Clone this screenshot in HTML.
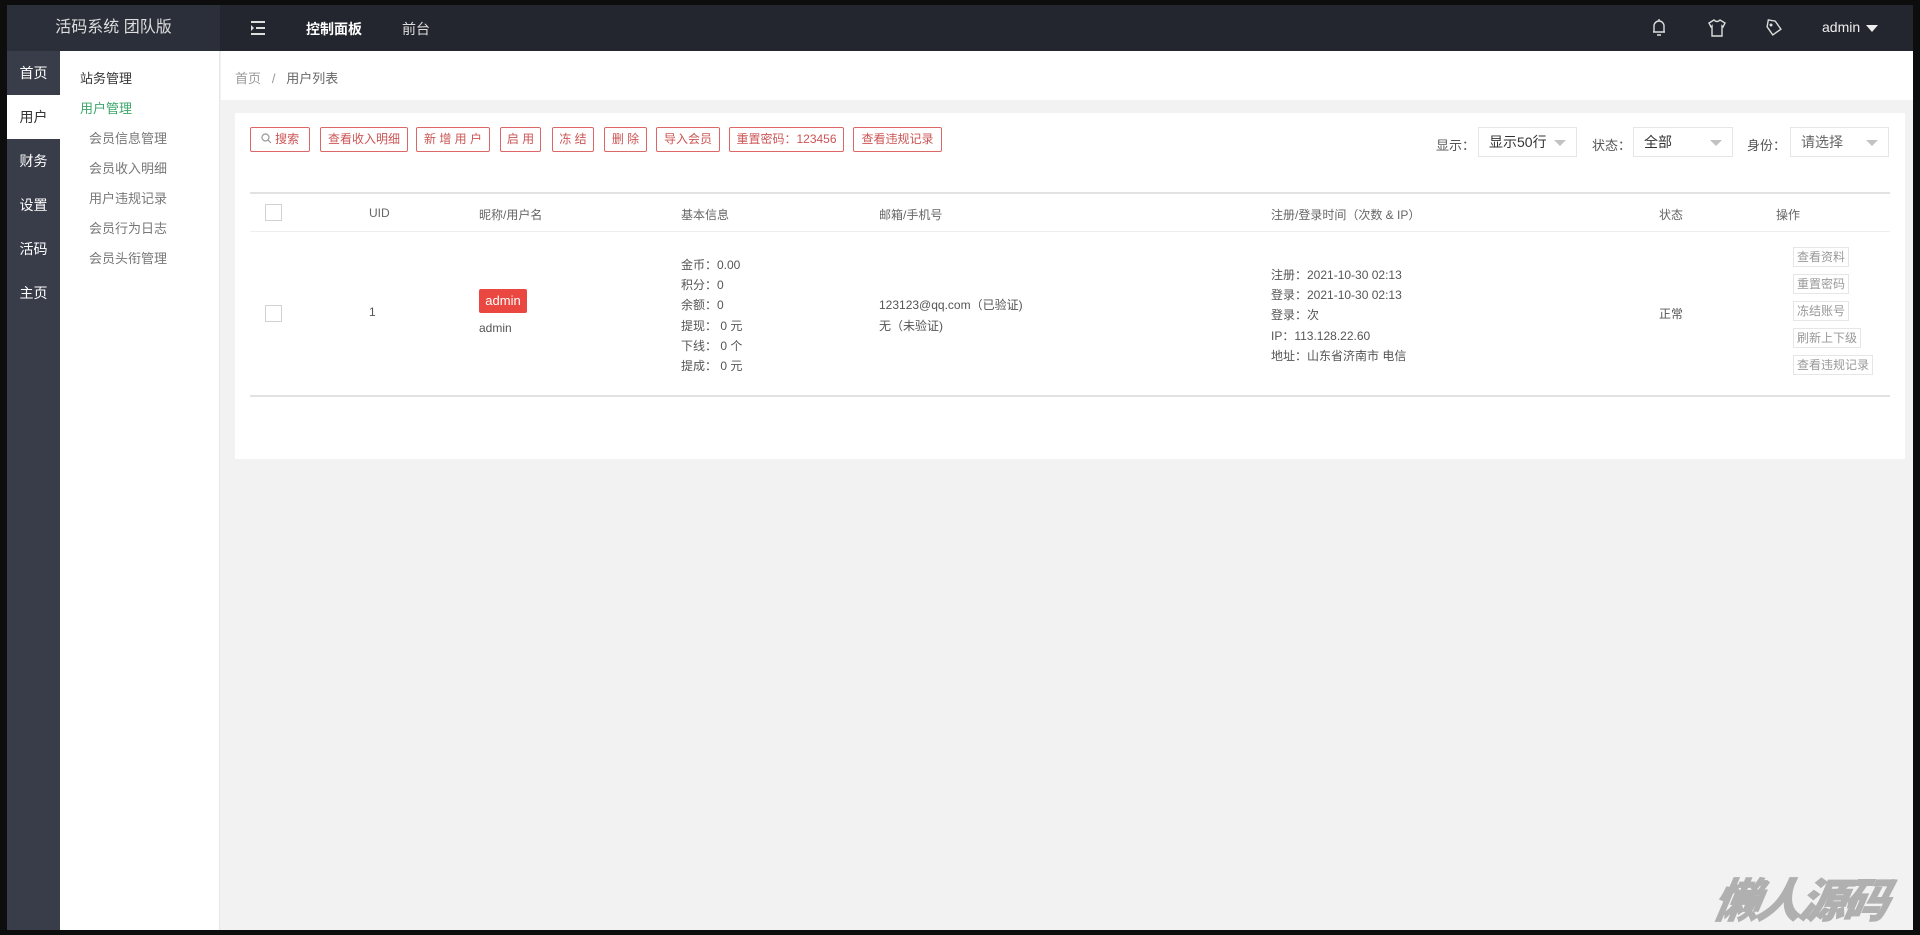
<!DOCTYPE html>
<html><head><meta charset="utf-8"><style>
*{margin:0;padding:0;box-sizing:border-box}
body{width:1920px;height:935px;background:#0d0d0d;position:relative;overflow:hidden;font-family:"Liberation Sans","Noto Sans CJK SC",sans-serif;font-size:13px;color:#555}
.a{position:absolute;white-space:nowrap}
#frame{position:absolute;left:7px;top:5px;width:1906px;height:925px;background:#f2f2f2;overflow:hidden}
.btn{position:absolute;top:122px;height:25px;border:1px solid #d66;color:#c55;border-radius:2px;font-size:12px;line-height:23px;text-align:center;background:#fff}
.sel{position:absolute;top:122px;height:30px;border:1px solid #e6e6e6;background:#fff;font-size:14px;line-height:28px;padding-left:10px;color:#333}
.sel:after{content:"";position:absolute;right:10px;top:12px;border:6px solid transparent;border-top:6px solid #c2c2c2}
.lbl{position:absolute;top:130px;font-size:13px;color:#555}
.op{position:absolute;left:1786px;height:20px;border:1px solid #e6e6e6;font-size:12px;line-height:18px;padding:0 3px;color:#999;background:#fff}
.side div{position:absolute;left:0;width:53px;height:44px;line-height:44px;text-align:center;color:#fff;font-size:14px}
.sub{position:absolute;font-size:13px;color:#666}
.th{position:absolute;top:201px;font-size:12px;color:#666}
</style></head><body>
<div id="frame">
 <div class="a" style="left:0;top:0;width:1906px;height:46px;background:#23262e"></div>
 <div class="a" style="left:0;top:0;width:213px;height:46px;background:#2b2f3a;color:#ddd;font-size:16px;line-height:46px;text-align:center">活码系统 团队版</div>
 <svg class="a" style="left:243px;top:15px" width="16" height="16" viewBox="0 0 16 16"><g stroke="#ddd" stroke-width="2"><line x1="1" y1="2" x2="15" y2="2"/><line x1="6" y1="8" x2="15" y2="8"/><line x1="1" y1="14" x2="15" y2="14"/></g><path d="M1 5 L4 8 L1 11Z" fill="#ddd"/></svg>
 <div class="a" style="left:299px;top:14px;color:#fff;font-size:14px;font-weight:bold">控制面板</div>
 <div class="a" style="left:395px;top:14px;color:#ddd;font-size:14px">前台</div>
 <svg class="a" style="left:1644px;top:13px" width="16" height="20" viewBox="0 0 16 20"><path d="M3 14 V8 a5 5 0 0 1 10 0 V14 H2 M14 14 H2 M6 17 h4 M8 1 v2" fill="none" stroke="#ddd" stroke-width="1.4"/></svg>
 <svg class="a" style="left:1700px;top:13px" width="20" height="20" viewBox="0 0 20 20"><path d="M7 2 L2 5 L4 9 L5 8 V18 H15 V8 L16 9 L18 5 L13 2 Q10 5 7 2Z" fill="none" stroke="#ddd" stroke-width="1.4"/></svg>
 <svg class="a" style="left:1757px;top:13px" width="20" height="20" viewBox="0 0 20 20"><path d="M3 3 H10 L17 10 L10 17 L3 10Z" fill="none" stroke="#ddd" stroke-width="1.4" transform="rotate(10 10 10)"/><circle cx="7" cy="7" r="1.5" fill="#ddd"/></svg>
 <div class="a" style="left:1815px;top:14px;color:#eee;font-size:14px">admin</div>
 <div class="a" style="left:1859px;top:20px;border:6px solid transparent;border-top:7px solid #eee"></div>

 <div class="a side" style="left:0;top:46px;width:53px;height:879px;background:#393d49">
  <div style="top:0">首页</div>
  <div style="top:44px;background:#fff;color:#333">用户</div>
  <div style="top:88px">财务</div>
  <div style="top:132px">设置</div>
  <div style="top:176px">活码</div>
  <div style="top:220px">主页</div>
 </div>
 <div class="a" style="left:53px;top:46px;width:160px;height:879px;background:#fff;border-right:1px solid #e6e6e6"></div>
 <div class="sub" style="left:73px;top:63px;color:#333">站务管理</div>
 <div class="sub" style="left:73px;top:93px;color:#3aa66a">用户管理</div>
 <div class="sub" style="left:82px;top:123px;color:#777">会员信息管理</div>
 <div class="sub" style="left:82px;top:153px;color:#777">会员收入明细</div>
 <div class="sub" style="left:82px;top:183px;color:#777">用户违规记录</div>
 <div class="sub" style="left:82px;top:213px;color:#777">会员行为日志</div>
 <div class="sub" style="left:82px;top:243px;color:#777">会员头衔管理</div>

 <div class="a" style="left:214px;top:46px;width:1692px;height:49px;background:#fff"></div>
 <div class="a" style="left:228px;top:63px;color:#999">首页 &nbsp; / &nbsp; <span style="color:#666">用户列表</span></div>

 <div class="a" style="left:228px;top:108px;width:1670px;height:346px;background:#fff"></div>
 <div class="btn" style="left:243px;width:60px"><svg width="11" height="11" viewBox="0 0 11 11" style="vertical-align:-1px"><circle cx="4.5" cy="4.5" r="3.5" fill="none" stroke="#999" stroke-width="1.2"/><line x1="7" y1="7" x2="10" y2="10" stroke="#999" stroke-width="1.2"/></svg> 搜索</div>
 <div class="btn" style="left:313px;width:88px">查看收入明细</div>
 <div class="btn" style="left:409px;width:74px">新 增 用 户</div>
 <div class="btn" style="left:493px;width:41px">启 用</div>
 <div class="btn" style="left:545px;width:42px">冻 结</div>
 <div class="btn" style="left:597px;width:43px">删 除</div>
 <div class="btn" style="left:649px;width:64px">导入会员</div>
 <div class="btn" style="left:722px;width:115px">重置密码：123456</div>
 <div class="btn" style="left:846px;width:89px">查看违规记录</div>
 <div class="lbl" style="left:1429px">显示：</div>
 <div class="sel" style="left:1471px;width:99px">显示50行</div>
 <div class="lbl" style="left:1585px">状态：</div>
 <div class="sel" style="left:1626px;width:100px">全部</div>
 <div class="lbl" style="left:1740px">身份：</div>
 <div class="sel" style="left:1783px;width:99px;color:#666">请选择</div>

 <div class="a" style="left:243px;top:187px;width:1640px;height:2px;background:#e2e2e2"></div>
 <div class="a" style="left:243px;top:226px;width:1640px;height:1px;background:#eee"></div>
 <div class="a" style="left:243px;top:390px;width:1640px;height:2px;background:#e2e2e2"></div>
 <div class="a" style="left:258px;top:199px;width:17px;height:17px;border:1px solid #d2d2d2;background:#fff"></div>
 <div class="th" style="left:362px">UID</div>
 <div class="th" style="left:472px">昵称/用户名</div>
 <div class="th" style="left:674px">基本信息</div>
 <div class="th" style="left:872px">邮箱/手机号</div>
 <div class="th" style="left:1264px">注册/登录时间（次数 &amp; IP）</div>
 <div class="th" style="left:1652px">状态</div>
 <div class="th" style="left:1769px">操作</div>

 <div class="a" style="left:258px;top:300px;width:17px;height:17px;border:1px solid #d2d2d2;background:#fff"></div>
 <div class="a" style="left:362px;top:300px;font-size:12px">1</div>
 <div class="a" style="left:472px;top:284px;width:48px;height:24px;background:#e9473f;color:#fff;line-height:24px;text-align:center;border-radius:2px">admin</div>
 <div class="a" style="left:472px;top:316px;font-size:12px">admin</div>
 <div class="a" style="left:674px;top:250px;line-height:20.2px;font-size:12px">金币：0.00<br>积分：0<br>余额：0<br>提现： 0 元<br>下线： 0 个<br>提成： 0 元</div>
 <div class="a" style="left:872px;top:290px;line-height:20.5px;font-size:12px">123123@qq.com（已验证)<br>无（未验证)</div>
 <div class="a" style="left:1264px;top:260px;line-height:20.2px;font-size:12px">注册：2021-10-30 02:13<br>登录：2021-10-30 02:13<br>登录：次<br>IP：113.128.22.60<br>地址：山东省济南市 电信</div>
 <div class="a" style="left:1652px;top:300px;font-size:12px">正常</div>
 <div class="op" style="top:242px">查看资料</div>
 <div class="op" style="top:269px">重置密码</div>
 <div class="op" style="top:296px">冻结账号</div>
 <div class="op" style="top:323px">刷新上下级</div>
 <div class="op" style="top:350px">查看违规记录</div>

 <div class="a" style="left:1708px;top:860px;font-size:46px;font-weight:900;font-style:italic;color:#b0b0b0;font-family:'Noto Sans CJK SC',sans-serif;letter-spacing:-3px;transform:skewX(-10deg);-webkit-text-stroke:1px #b0b0b0">懒人源码</div>
</div>
</body></html>
